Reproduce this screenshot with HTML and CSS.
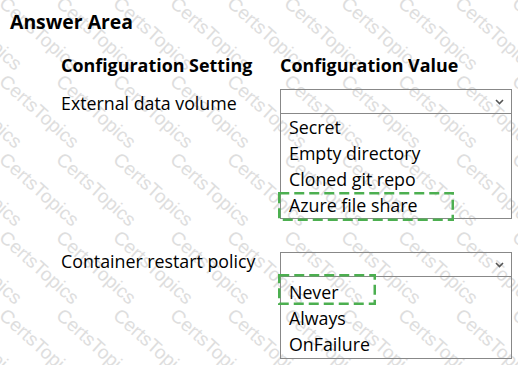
FILE: index.html
```html
<!DOCTYPE html>
<html>
  <head>
    <meta charset="utf-8">
    <title>Answer Area</title>
    <link rel="stylesheet" href="styles.css">
  </head>
  <body>
    <svg class="watermark" id="watermark" width="518" height="365"></svg>
    <div class="page">
      <h1 class="title">Answer Area</h1>
      <div class="answer">
        <div class="head">Configuration Setting</div>
        <div class="head">Configuration Value</div>

        <div class="label first">External data volume</div>
        <div class="dropdown first">
          <div class="select">
            <svg class="chevron" width="9" height="6" viewBox="0 0 9 6"><path d="M1 1 L4.5 4.5 L8 1" fill="none" stroke="#555" stroke-width="1.6"/></svg>
          </div>
          <ul class="options">
            <li>Secret</li>
            <li>Empty directory</li>
            <li>Cloned git repo</li>
            <li class="picked">Azure file share
              <svg class="mark mark-azure" width="176" height="29"><rect x="1.25" y="1.25" width="173.5" height="26.5" fill="none" stroke="#4caf50" stroke-width="2.5" stroke-dasharray="10 5"/></svg>
            </li>
          </ul>
        </div>

        <div class="label second">Container restart policy</div>
        <div class="dropdown second">
          <div class="select">
            <svg class="chevron" width="9" height="6" viewBox="0 0 9 6"><path d="M1 1 L4.5 4.5 L8 1" fill="none" stroke="#555" stroke-width="1.6"/></svg>
          </div>
          <ul class="options short">
            <li class="picked">Never
              <svg class="mark mark-never" width="98" height="31"><rect x="1.25" y="1.25" width="95.5" height="28.5" fill="none" stroke="#4caf50" stroke-width="2.5" stroke-dasharray="10 5"/></svg>
            </li>
            <li>Always</li>
            <li>OnFailure</li>
          </ul>
        </div>
      </div>
    </div>
    <script>
// faint diagonal watermark tiled over the whole picture
let svg = document.getElementById("watermark");
let ns = "http://www.w3.org/2000/svg";
for (let row = -3; row < 5; row++) {
  for (let col = -2; col < 10; col++) {
    let x = -2 + col * 57;
    let y = 161 + row * 78;
    if (y < -75 || x < -75) continue;
    let t = document.createElementNS(ns, "text");
    t.setAttribute("x", x);
    t.setAttribute("y", y);
    t.setAttribute("transform", "rotate(42 " + x + " " + y + ")");
    t.textContent = "CertsTopics";
    svg.appendChild(t);
  }
}
</script>
  </body>
</html>
```

FILE: styles.css
```css
body {
  margin: 0;
  padding: 0;
  background-color: #fff;
  color: #000;
  font-family: "Open Sans", "Noto Sans", sans-serif;
  position: relative;
  width: 518px;
  height: 365px;
  overflow: hidden;
}
.watermark {
  position: absolute;
  left: 0;
  top: 0;
  z-index: 0;
}
.watermark text {
  font-family: "Liberation Sans", Arial, sans-serif;
  font-size: 19px;
  fill: #dedede;
}
.page {
  position: relative;
  z-index: 1;
}
.title {
  margin: 0;
  padding: 9px 0 0 10px;
  font-size: 19.4px;
  line-height: 26px;
  font-weight: 700;
}
.answer {
  display: grid;
  grid-template-columns: 219px 232px;
  margin-top: 18px;
  padding-left: 61px;
}
.head {
  font-size: 17.9px;
  font-weight: 700;
  line-height: 24px;
}
.label {
  font-size: 17.8px;
  line-height: 24px;
}
.label.first {
  margin-top: 14px;
}
.label.second {
  margin-top: 30px;
}
.dropdown.first {
  margin-top: 12px;
}
.dropdown.second {
  margin-top: 33px;
}
.select {
  box-sizing: border-box;
  height: 25px;
  border: 1px solid #888;
  display: flex;
  justify-content: flex-end;
  align-items: center;
  padding-right: 7px;
}
.chevron {
  margin-top: 1px;
}
.options {
  list-style: none;
  margin: 0;
  padding: 0 8px;
  border: 1px solid #888;
  border-top: none;
  font-size: 17.8px;
}
.options.short {
  padding-top: 2px;
  padding-bottom: 1px;
}
.options li {
  line-height: 26px;
  position: relative;
}
.mark {
  position: absolute;
}
.mark-azure {
  left: -11px;
  top: 0;
}
.mark-never {
  left: -11px;
  top: -5px;
}
```
